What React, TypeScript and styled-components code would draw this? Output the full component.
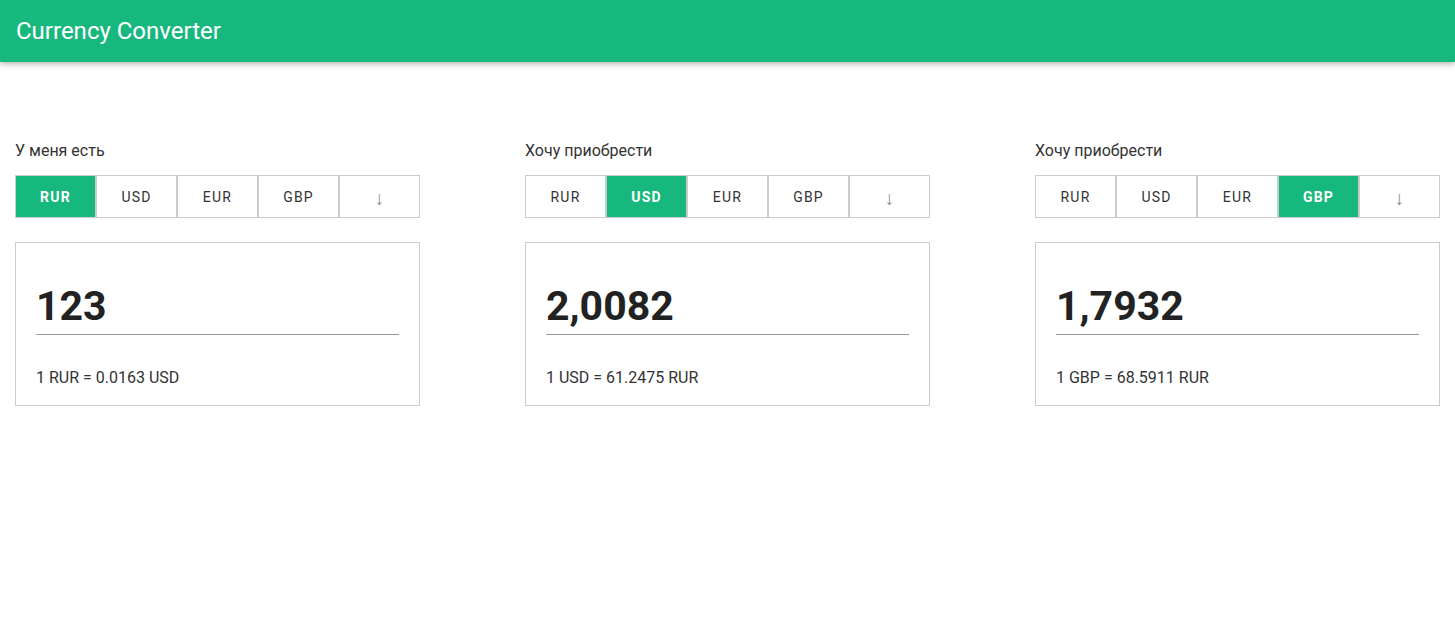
import React from "react";
import styled, { createGlobalStyle } from "styled-components";

const GREEN = "#17b87e";

const GlobalStyle = createGlobalStyle`
  body {
    margin: 0;
    background: #fff;
    font-family: Roboto, "Noto Sans", Arial, sans-serif;
    color: #333;
  }
`;

type Converter = {
  label: string;
  active: string;
  amount: string;
  rate: string;
};

const CURRENCIES = ["RUR", "USD", "EUR", "GBP"];

const converters: Converter[] = [
  { label: "У меня есть", active: "RUR", amount: "123", rate: "1 RUR = 0.0163 USD" },
  { label: "Хочу приобрести", active: "USD", amount: "2,0082", rate: "1 USD = 61.2475 RUR" },
  { label: "Хочу приобрести", active: "GBP", amount: "1,7932", rate: "1 GBP = 68.5911 RUR" },
];

export default function App() {
  return (
    <>
      <GlobalStyle />
      <Header>
        <Title>Currency Converter</Title>
      </Header>
      <Main>
        {converters.map((c, i) => (
          <Column key={i}>
            <Label>{c.label}</Label>
            <ButtonRow>
              {CURRENCIES.map((cur) => (
                <CurrencyButton key={cur} $active={cur === c.active}>
                  {cur}
                </CurrencyButton>
              ))}
              <ArrowButton>↓</ArrowButton>
            </ButtonRow>
            <Card>
              <AmountInput defaultValue={c.amount} />
              <Rate>{c.rate}</Rate>
            </Card>
          </Column>
        ))}
      </Main>
    </>
  );
}

const Header = styled.header`
  height: 62px;
  background: ${GREEN};
  display: flex;
  align-items: center;
  padding: 0 16px;
  box-shadow: 0 2px 6px rgba(0, 0, 0, 0.3);
  position: relative;
`;

const Title = styled.h1`
  margin: 0;
  font-size: 24px;
  font-weight: 400;
  color: #fff;
`;

const Main = styled.main`
  display: flex;
  justify-content: space-between;
  padding: 79px 15px 0;
`;

const Column = styled.section`
  width: 405px;
  display: flex;
  flex-direction: column;
`;

const Label = styled.div`
  font-size: 16px;
  line-height: 19px;
  color: #333;
  margin-bottom: 15px;
`;

const ButtonRow = styled.div`
  display: grid;
  grid-template-columns: repeat(5, 1fr);
  height: 43px;
`;

const CurrencyButton = styled.button<{ $active?: boolean }>`
  border: 1px solid #ccc;
  background: ${(p) => (p.$active ? GREEN : "#fff")};
  color: ${(p) => (p.$active ? "#fff" : "#333")};
  font-family: Roboto, Arial, sans-serif;
  font-size: 14px;
  font-weight: ${(p) => (p.$active ? 700 : 400)};
  letter-spacing: 1.2px;
  padding: 0;
  cursor: pointer;
`;

const ArrowButton = styled(CurrencyButton)`
  color: #888;
  font-size: 19px;
  font-weight: 300;
  letter-spacing: 0;
  padding-top: 3px;
`;

const Card = styled.div`
  margin-top: 24px;
  border: 1px solid #ccc;
  padding: 20px 20px 18px;
`;

const AmountInput = styled.input`
  display: block;
  width: 100%;
  box-sizing: border-box;
  border: none;
  border-bottom: 1px solid #999;
  outline: none;
  padding: 19px 0 4px;
  font-family: Roboto, Arial, sans-serif;
  font-size: 41px;
  font-weight: 700;
  color: #222;
  background: transparent;
`;

const Rate = styled.div`
  margin-top: 33px;
  font-size: 16px;
  line-height: 19px;
  color: #333;
`;
